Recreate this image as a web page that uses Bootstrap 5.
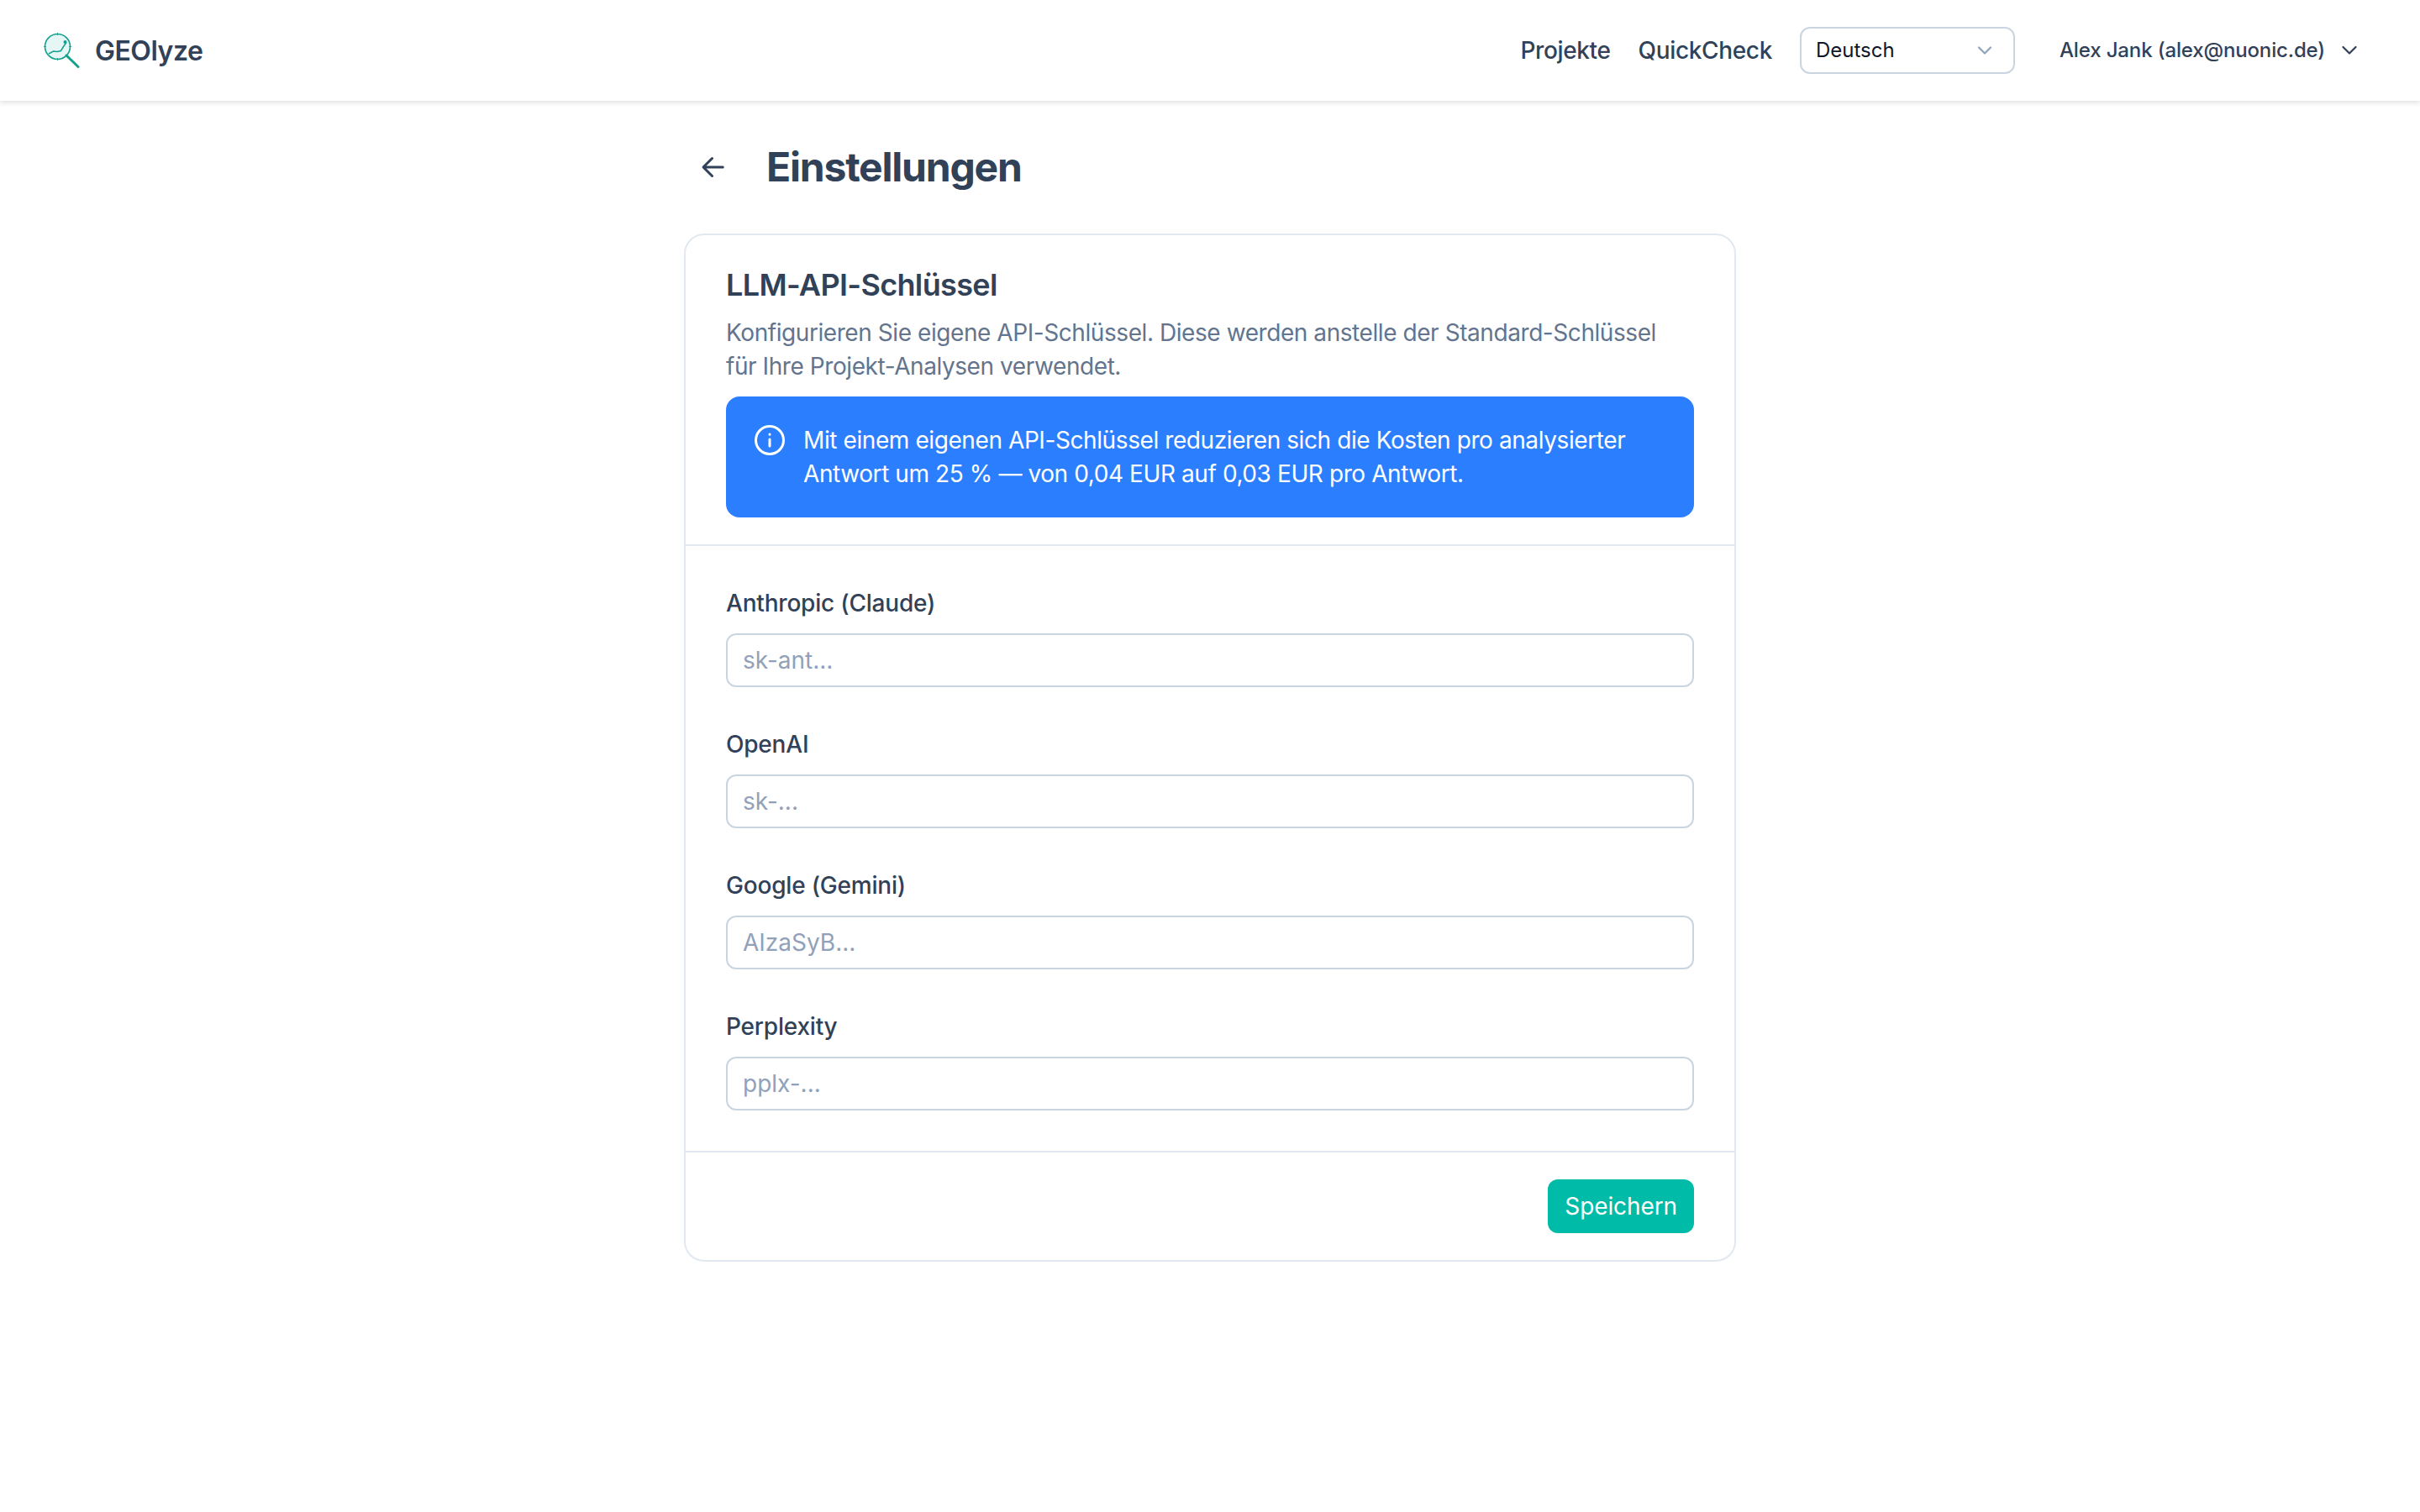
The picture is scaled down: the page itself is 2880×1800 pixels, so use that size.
<!DOCTYPE html>
<html lang="de">
<head>
  <meta charset="UTF-8">
  <title>Einstellungen</title>
  <link href="https://cdn.jsdelivr.net/npm/bootstrap@5.3.2/dist/css/bootstrap.min.css" rel="stylesheet">
  <style>
    body {
      font-family: "Inter", "Liberation Sans", sans-serif;
      font-size: 28px;
      line-height: 40px;
      color: #314158;
      background: #fff;
    }
    .top-bar {
      height: 120px;
      padding: 0 52px;
      background: #fff;
      box-shadow: 0 2px 6px rgba(15, 23, 43, .14);
    }
    .brand-name {
      font-size: 32px;
      font-weight: 600;
      letter-spacing: -.5px;
      color: #314158;
      gap: 18px;
    }
    .brand-name span {
      padding-top: 2px;
    }
    .top-nav {
      gap: 33px;
    }
    .top-link {
      color: #314158;
      font-weight: 500;
      letter-spacing: -.35px;
      text-decoration: none;
    }
    .lang-btn {
      width: 256px;
      height: 56px;
      padding: 0 22px 0 17px;
      font-size: 24px;
      line-height: 32px;
      color: #0f172b;
      background: #fff;
      border: 2px solid #cad5e2;
      border-radius: 12px;
    }
    .user-btn {
      padding: 0;
      margin-left: 20px;
      margin-right: 20px;
      gap: 17px;
      font-size: 24px;
      font-weight: 500;
      letter-spacing: -.14px;
      line-height: 32px;
      color: #314158;
      background: none;
      border: 0;
    }
    .page-wrap {
      width: 1252px;
      margin: 0 auto;
    }
    .page-head {
      height: 158px;
      padding-left: 17px;
      gap: 45px;
    }
    .page-head h1 {
      margin: 0;
      font-size: 48px;
      line-height: 64px;
      font-weight: 700;
      letter-spacing: -1.2px;
      color: #314158;
    }
    .settings-card {
      border: 2px solid #e2e8f0;
      border-radius: 24px;
      --bs-card-inner-border-radius: 22px;
      color: #314158;
    }
    .settings-card .card-header {
      padding: 35px 48px 32px;
      background: none;
      border-bottom: 2px solid #e2e8f0;
    }
    .settings-card h2 {
      margin: 0 0 13px;
      font-size: 36px;
      line-height: 48px;
      font-weight: 600;
      letter-spacing: -.65px;
    }
    .intro-text {
      max-width: 1130px;
      margin: 0 0 16px;
      letter-spacing: -.43px;
      color: #62748e;
    }
    .key-notice {
      margin: 0;
      padding: 32px;
      gap: 20px;
      letter-spacing: -.41px;
      color: #fff;
      background: #2b7fff;
      border: 0;
      border-radius: 16px;
    }
    .settings-card .card-body {
      padding: 48px;
    }
    .key-field + .key-field {
      margin-top: 48px;
    }
    .key-field label {
      margin-bottom: 16px;
      font-weight: 500;
      letter-spacing: -.2px;
      line-height: 40px;
      display: block;
    }
    .key-field .form-control {
      height: 64px;
      padding: 0 18px;
      font-size: 28px;
      color: #314158;
      border: 2px solid #cad5e2;
      border-radius: 12px;
    }
    .key-field .form-control::placeholder {
      color: #90a1b9;
    }
    .settings-card .card-footer {
      padding: 32px 48px;
      background: none;
      border-top: 2px solid #e2e8f0;
    }
    .save-btn {
      height: 64px;
      padding: 0 20px;
      font-size: 28px;
      font-weight: 400;
      letter-spacing: -.1px;
      line-height: 40px;
      color: #fff;
      background: #00bba7;
      border: 0;
      border-radius: 12px;
    }
  </style>
</head>
<body>
  <header class="top-bar d-flex align-items-center justify-content-between">
    <a class="brand-name d-flex align-items-center text-decoration-none" href="#">
      <svg width="43" height="42" viewBox="0 0 43 42" fill="none">
        <circle cx="16.500" cy="16.500" r="15" fill="#e6f6f4" stroke="#14a08e" stroke-width="1.600"/>
        <path d="M16.500 0v3M16.500 30v3M0 16.500h3M30 16.500h3" stroke="#14a08e" stroke-width=".9"/>
        <path d="M6 25l5.500-3 4.500.5 4.500-1 3-5 3.500-5" stroke="#14a08e" stroke-width="1.500"/>
        <circle cx="25.500" cy="11" r="2" fill="#14a08e"/>
        <path d="M27 27l14 13.500" stroke="#14a08e" stroke-width="3" stroke-linecap="round"/>
      </svg>
      <span>GEOlyze</span>
    </a>
    <nav class="top-nav d-flex align-items-center">
      <a class="top-link" href="#">Projekte</a>
      <a class="top-link" href="#">QuickCheck</a>
      <button class="lang-btn d-flex align-items-center justify-content-between" type="button">
        <span>Deutsch</span>
        <svg width="24" height="24" viewBox="0 0 24 24" fill="none" stroke="#90a1b9" stroke-width="2.200" stroke-linecap="round" stroke-linejoin="round"><path d="M5 8.500l7 7 7-7"/></svg>
      </button>
      <button class="user-btn d-flex align-items-center" type="button">
        <span>Alex Jank (alex@nuonic.de)</span>
        <svg width="24" height="24" viewBox="0 0 24 24" fill="none" stroke="#314158" stroke-width="2.200" stroke-linecap="round" stroke-linejoin="round"><path d="M4.500 8l7.500 7.500 7.500-7.500"/></svg>
      </button>
    </nav>
  </header>

  <main class="page-wrap">
    <div class="page-head d-flex align-items-center">
      <svg width="36" height="36" viewBox="0 0 24 24" fill="none" stroke="#314158" stroke-width="2" stroke-linecap="round" stroke-linejoin="round"><path d="M19.500 12h-15M11 5l-7 7 7 7"/></svg>
      <h1>Einstellungen</h1>
    </div>

    <div class="card settings-card">
      <div class="card-header">
        <h2>LLM-API-Schlüssel</h2>
        <p class="intro-text">Konfigurieren Sie eigene API-Schlüssel. Diese werden anstelle der Standard-Schlüssel für Ihre Projekt-Analysen verwendet.</p>
        <div class="alert key-notice d-flex align-items-start">
          <svg class="flex-shrink-0" width="40" height="40" viewBox="0 0 40 40" fill="none" stroke="#fff" stroke-width="3" stroke-linecap="round"><circle cx="20" cy="20" r="16.500"/><path d="M20 19v8M20 13v.2"/></svg>
          <div>Mit einem eigenen API-Schlüssel reduzieren sich die Kosten pro analysierter Antwort um 25 % — von 0,04 EUR auf 0,03 EUR pro Antwort.</div>
        </div>
      </div>
      <div class="card-body">
        <div class="key-field">
          <label for="keyAnthropic">Anthropic (Claude)</label>
          <input class="form-control" id="keyAnthropic" type="text" placeholder="sk-ant...">
        </div>
        <div class="key-field">
          <label for="keyOpenai">OpenAI</label>
          <input class="form-control" id="keyOpenai" type="text" placeholder="sk-...">
        </div>
        <div class="key-field">
          <label for="keyGoogle">Google (Gemini)</label>
          <input class="form-control" id="keyGoogle" type="text" placeholder="AIzaSyB...">
        </div>
        <div class="key-field">
          <label for="keyPerplexity">Perplexity</label>
          <input class="form-control" id="keyPerplexity" type="text" placeholder="pplx-...">
        </div>
      </div>
      <div class="card-footer d-flex justify-content-end">
        <button class="btn save-btn" type="button">Speichern</button>
      </div>
    </div>
  </main>

  <script src="https://cdn.jsdelivr.net/npm/bootstrap@5.3.2/dist/js/bootstrap.bundle.min.js"></script>
</body>
</html>
